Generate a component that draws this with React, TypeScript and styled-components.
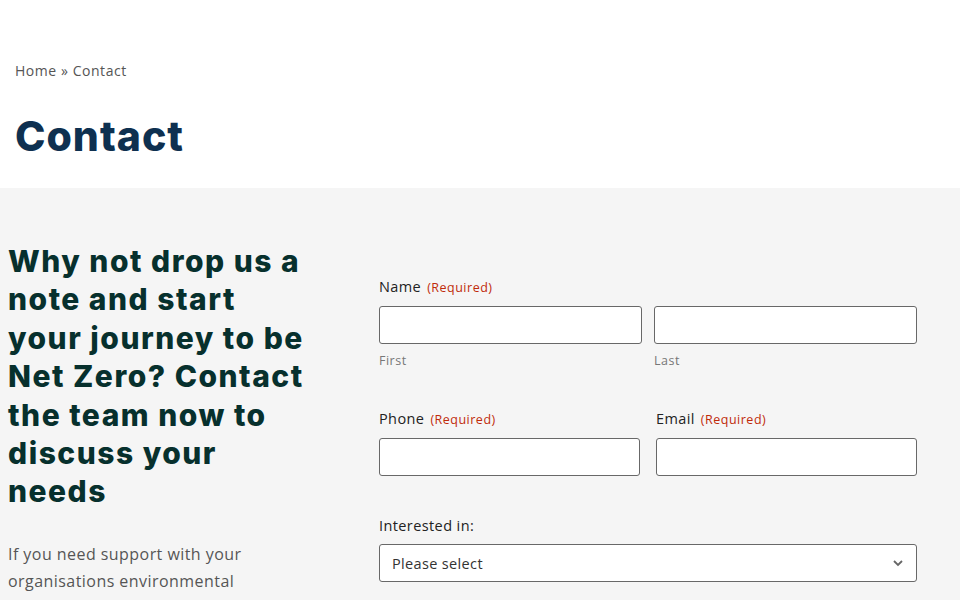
import React from "react";
import styled, { createGlobalStyle } from "styled-components";

const Global = createGlobalStyle`
  html, body { margin: 0; padding: 0; background: #fff; }
  body { font-family: "Open Sans", "Liberation Sans", sans-serif; }
  * { box-sizing: border-box; }
`;

const Page = styled.div`
  width: 960px;
  height: 600px;
  overflow: hidden;
  display: flex;
  flex-direction: column;
`;

const Hero = styled.header`
  height: 188px;
  background: #fff;
  padding: 61px 15px 0;
  display: flex;
  flex-direction: column;
`;

const Breadcrumb = styled.nav`
  font-family: "Open Sans", sans-serif;
  font-size: 14px;
  line-height: 20px;
  color: #555;
  letter-spacing: 0.55px;
`;

const Title = styled.h1`
  margin: 31px 0 0;
  font-family: Inter, "Open Sans", sans-serif;
  font-weight: 800;
  font-size: 41px;
  line-height: 48px;
  letter-spacing: 1px;
  color: #0e3050;
`;

const Section = styled.section`
  flex: 1;
  background: #f5f5f5;
  display: flex;
  padding: 54px 0 0 8px;
`;

const Aside = styled.div`
  width: 310px;
  flex: none;
`;

const Lead = styled.h2`
  margin: 0;
  width: 302px;
  font-family: Inter, "Open Sans", sans-serif;
  font-weight: 800;
  font-size: 30px;
  line-height: 38.4px;
  color: #07302d;
  letter-spacing: 1.5px;
`;

const Para = styled.p`
  margin: 30px 0 0;
  font-family: "Open Sans", sans-serif;
  font-size: 16px;
  line-height: 27px;
  color: #555;
  letter-spacing: 0.45px;
  width: 260px;
`;

const Form = styled.form`
  margin-left: 61px;
  width: 538px;
  padding-top: 35px;
  display: flex;
  flex-direction: column;
`;

const Field = styled.div<{ $mb: number }>`
  display: flex;
  flex-direction: column;
  margin-bottom: ${(p) => p.$mb}px;
`;

const Row = styled.div<{ $gap: number }>`
  display: grid;
  grid-template-columns: 1fr 1fr;
  column-gap: ${(p) => p.$gap}px;
`;

const Label = styled.label`
  font-family: "Open Sans", sans-serif;
  font-size: 14.5px;
  line-height: 20px;
  color: #222;
  letter-spacing: 0.4px;
  margin-bottom: 8px;
  display: flex;
  align-items: baseline;
  gap: 6px;
`;

const Req = styled.span`
  font-size: 12.5px;
  letter-spacing: 0.5px;
  color: #c02b0a;
`;

const Input = styled.input`
  display: block;
  height: 38px;
  width: 100%;
  border: 1px solid #686868;
  border-radius: 3px;
  background: #fff;
  font: inherit;
`;

const Sub = styled.span`
  display: block;
  font-family: "Open Sans", sans-serif;
  font-size: 12.5px;
  line-height: 16px;
  letter-spacing: 0.5px;
  color: #777;
  margin-top: 9px;
`;

const SelectBox = styled.div`
  height: 38px;
  border: 1px solid #686868;
  border-radius: 3px;
  background: #fff;
  display: flex;
  align-items: center;
  justify-content: space-between;
  padding: 0 12px;
  font-family: "Open Sans", sans-serif;
  font-size: 14.5px;
  letter-spacing: 0.35px;
  color: #333;
`;

export default function App() {
  return (
    <Page>
      <Global />
      <Hero>
        <Breadcrumb>Home » Contact</Breadcrumb>
        <Title>Contact</Title>
      </Hero>
      <Section>
        <Aside>
          <Lead>
            Why not drop us a note and start your journey to be Net Zero? Contact the team now to
            discuss your needs
          </Lead>
          <Para>If you need support with your organisations environmental</Para>
        </Aside>
        <Form>
          <Field $mb={40}>
            <Label>
              Name <Req>(Required)</Req>
            </Label>
            <Row $gap={12}>
              <div>
                <Input />
                <Sub>First</Sub>
              </div>
              <div>
                <Input />
                <Sub>Last</Sub>
              </div>
            </Row>
          </Field>
          <Row $gap={16}>
            <Field $mb={40}>
              <Label>
                Phone <Req>(Required)</Req>
              </Label>
              <Input />
            </Field>
            <Field $mb={40}>
              <Label>
                Email <Req>(Required)</Req>
              </Label>
              <Input />
            </Field>
          </Row>
          <Field $mb={0}>
            <Label>Interested in:</Label>
            <SelectBox>
              <span>Please select</span>
              <svg width="12" height="8" viewBox="0 0 12 8">
                <path d="M2 2l4 4 4-4" fill="none" stroke="#666" strokeWidth="1.8" />
              </svg>
            </SelectBox>
          </Field>
        </Form>
      </Section>
    </Page>
  );
}
